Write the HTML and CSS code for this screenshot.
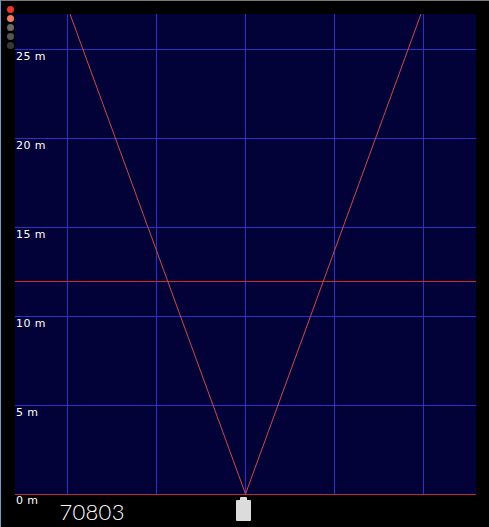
FILE: index.html
```html
<!DOCTYPE html>
<html>
<head>
<meta charset="utf-8">
<link rel="stylesheet" href="styles.css">
</head>
<body>
<div class="frame">
  <div class="side">
    <span class="dot d1"></span>
    <span class="dot d2"></span>
    <span class="dot d3"></span>
    <span class="dot d4"></span>
    <span class="dot d5"></span>
  </div>
  <div class="main">
    <svg class="plot" width="461" height="481" viewBox="0 0 461 481" shape-rendering="crispEdges">
      <rect x="0" y="0" width="461" height="480" fill="#020238"/>
      <g fill="#3030c4">
        <rect x="52" y="0" width="1" height="480"/>
        <rect x="141" y="0" width="1" height="480"/>
        <rect x="230" y="0" width="1" height="480"/>
        <rect x="319" y="0" width="1" height="480"/>
        <rect x="408" y="0" width="1" height="480"/>
        <rect x="0" y="35" width="461" height="1"/>
        <rect x="0" y="124" width="461" height="1"/>
        <rect x="0" y="213" width="461" height="1"/>
        <rect x="0" y="302" width="461" height="1"/>
        <rect x="0" y="391" width="461" height="1"/>
      </g>
      <rect x="0" y="267" width="461" height="1" fill="#d22a2a"/>
      <rect x="0" y="480" width="461" height="1" fill="#c02c2c"/>
      <g stroke="#c84a4a" stroke-width="1" fill="none" shape-rendering="geometricPrecision">
        <line x1="230.5" y1="480" x2="55" y2="0"/>
        <line x1="230.5" y1="480" x2="406" y2="0"/>
      </g>
      <g class="lbl">
        <text x="1" y="46">25 m</text>
        <text x="1" y="135">20 m</text>
        <text x="1" y="224">15 m</text>
        <text x="1" y="313">10 m</text>
        <text x="1" y="402">5 m</text>
      </g>
    </svg>
    <div class="footer">
      <span class="zero">0 m</span>
      <span class="count">70803</span>
      <span class="battery"><span class="nub"></span><span class="body"></span></span>
    </div>
  </div>
</div>
</body>
</html>
```
FILE: styles.css
```css
html, body {
  margin: 0;
  padding: 0;
  background: #000;
}
.frame {
  width: 488px;
  height: 526px;
  border-top: 1px solid #7a7a7a;
  border-left: 1px solid #6a9cc4;
  display: flex;
  background: #000;
  overflow: hidden;
}
.side {
  width: 14px;
  display: flex;
  flex-direction: column;
  align-items: center;
  gap: 2px;
  padding-top: 5px;
  box-sizing: border-box;
  padding-left: 4px;
}
.dot {
  width: 7px;
  height: 7px;
  border-radius: 50%;
  display: block;
}
.d1 { background: #e8382c; }
.d2 { background: #f07a6a; }
.d3 { background: #6a6a6a; }
.d4 { background: #555; }
.d5 { background: #383838; }
.main {
  display: flex;
  flex-direction: column;
  padding-top: 13px;
}
.plot {
  display: block;
}
.lbl text {
  fill: #ffffff;
  font-family: "DejaVu Sans", sans-serif;
  font-size: 11px;
  letter-spacing: 0.4px;
}
.footer {
  display: flex;
  align-items: flex-start;
  height: 31px;
  color: #fff;
}
.zero {
  font-family: "DejaVu Sans", sans-serif;
  font-size: 11px;
  letter-spacing: 0.4px;
  margin-left: 1px;
  margin-top: 0;
  line-height: 12px;
}
.count {
  font-family: "Lato", sans-serif;
  font-weight: 300;
  font-size: 22px;
  line-height: 22px;
  margin-left: 21px;
  margin-top: 6px;
  letter-spacing: 0.3px;
}
.battery {
  display: flex;
  flex-direction: column;
  align-items: center;
  margin-left: 111px;
  margin-top: 2px;
}
.nub {
  width: 7px;
  height: 3px;
  background: #dcdcdc;
  border-radius: 1px 1px 0 0;
}
.body {
  width: 15px;
  height: 21px;
  background: #dcdcdc;
  border-radius: 1px;
}
```
